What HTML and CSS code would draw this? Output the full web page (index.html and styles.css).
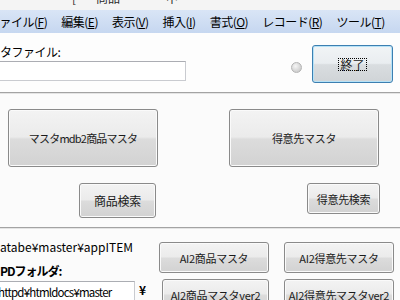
FILE: index.html
```html
<!DOCTYPE html>
<html lang="ja">
<head>
<meta charset="utf-8">
<title>Form</title>
<link rel="stylesheet" href="styles.css">
</head>
<body>
<div class="titlebar"><div class="tb-line"><span class="tb-a">[</span><span class="tb-b">商品</span><span class="tb-c">中</span></div></div>
<nav class="menubar">
  <span class="mi first">ファイル(<u>F</u>)</span>
  <span class="mi">編集(<u>E</u>)</span>
  <span class="mi">表示(<u>V</u>)</span>
  <span class="mi">挿入(<u>I</u>)</span>
  <span class="mi">書式(<u>O</u>)</span>
  <span class="mi">レコード(<u>R</u>)</span>
  <span class="mi">ツール(<u>T</u>)</span>
</nav>
<section class="filesec">
  <div class="filecol">
    <div class="lbl">タファイル:</div>
    <div class="field wide"></div>
  </div>
  <span class="radio"></span>
  <button class="btn focus"><span class="focusrect">終了</span></button>
</section>
<div class="sep"></div>
<section class="mid">
  <div class="row r1">
    <button class="btn big tight">マスタmdb2商品マスタ</button>
    <button class="btn big">得意先マスタ</button>
  </div>
  <div class="row r2">
    <button class="btn s1">商品検索</button>
    <button class="btn s2">得意先検索</button>
  </div>
</section>
<div class="sep"></div>
<section class="bottom">
  <div class="pathcol">
    <div class="path">atabe¥master¥appITEM</div>
    <div class="lbl bold">PDフォルダ:</div>
    <div class="fieldrow"><div class="field narrow">httpd¥htmldocs¥master</div><span class="yen">¥</span></div>
  </div>
  <div class="btncol c1">
    <button class="btn ai">AI2商品マスタ</button>
    <button class="btn ai shift">AI2商品マスタver2</button>
  </div>
  <div class="btncol c2">
    <button class="btn ai">AI2得意先マスタ</button>
    <button class="btn ai">AI2得意先マスタver2</button>
  </div>
</section>
</body>
</html>
```
FILE: styles.css
```css
html, body {
  margin: 0;
  padding: 0;
}
body {
  width: 400px;
  height: 300px;
  overflow: hidden;
  background: #fbfbfb;
  font-family: "Noto Sans CJK JP", "Liberation Sans", sans-serif;
  font-size: 12px;
  color: #000;
}
.titlebar {
  height: 10px;
  background: #f4f4f4;
  overflow: hidden;
  color: #2a2a2a;
}
.tb-line {
  display: flex;
  margin-top: -8px;
  line-height: 12px;
  height: 12px;
}
.tb-a { margin-left: 72px; }
.tb-b { margin-left: 20px; }
.tb-c { margin-left: 46px; }

.menubar {
  height: 23px;
  display: flex;
  align-items: center;
  gap: 14px;
  background: linear-gradient(#d9e5f6, #c6d7f0);
  white-space: nowrap;
  line-height: 23px;
  letter-spacing: -0.5px;
}
.mi u { text-decoration: underline; text-underline-offset: 1px; }
.mi.first { margin-left: -12px; }

.filesec {
  height: 59px;
  display: flex;
  align-items: flex-start;
  background: #fdfdfd;
}
.filecol {
  margin-left: -2px;
  padding-top: 12px;
  width: 188px;
}
.lbl {
  line-height: 14px;
  height: 14px;
  white-space: nowrap;
}
.filecol .lbl { margin-left: 2px; letter-spacing: -0.5px; }
.field {
  box-sizing: border-box;
  background: #fff;
  border: 1px solid #c9cbd0;
  border-top-color: #abadb3;
}
.field.wide {
  margin-top: 2px;
  width: 188px;
  height: 20px;
}
.radio {
  box-sizing: border-box;
  width: 11px;
  height: 11px;
  margin-left: 105px;
  margin-top: 29px;
  border-radius: 50%;
  border: 1px solid #b4b4b4;
  background: radial-gradient(circle at 40% 35%, #f6f6f6, #cdcdcd 75%);
}
.btn {
  box-sizing: border-box;
  padding: 0;
  margin: 0;
  font-family: "Noto Sans CJK JP", "Liberation Sans", sans-serif;
  font-size: 11px;
  letter-spacing: -0.3px;
  color: #1a1a1a;
  border: 1px solid #8a8a8a;
  border-radius: 3px;
  background: linear-gradient(#f3f3f3 0%, #ebebeb 48%, #dcdcdc 52%, #d2d2d2 100%);
  box-shadow: inset 0 0 0 1px #fafafa;
  white-space: nowrap;
  display: flex;
  align-items: center;
  justify-content: center;
}
.btn.tight { letter-spacing: -0.8px; }
.btn.focus {
  margin-left: 10px;
  margin-top: 12px;
  width: 81px;
  height: 38px;
  font-size: 12px;
  letter-spacing: 0;
  border-color: #3c7fb1;
  box-shadow: inset 0 0 0 1px #b6e2f7;
  background: linear-gradient(#f1f4f6 0%, #e9edf0 48%, #d9dde0 52%, #d0d4d7 100%);
}
.focusrect {
  outline: 1px dotted #000;
  padding: 0 1px;
  line-height: 11px;
}
.sep {
  height: 0;
  border-top: 1px solid #a3a3a3;
  border-bottom: 1px solid #e4e4e4;
}
.mid {
  height: 133px;
}
.row {
  display: flex;
  align-items: flex-start;
}
.r1 {
  padding-left: 8px;
  padding-top: 15px;
  gap: 71px;
}
.btn.big {
  width: 150px;
  height: 58px;
}
.r2 {
  margin-top: 16px;
}
.btn.s1 {
  margin-left: 79px;
  width: 77px;
  height: 35px;
  font-size: 12px;
}
.btn.s2 {
  margin-left: 151px;
  width: 73px;
  height: 31px;
}
.bottom {
  display: flex;
  align-items: flex-start;
}
.pathcol {
  width: 159px;
  padding-top: 11px;
}
.path {
  line-height: 14px;
  white-space: nowrap;
}
.lbl.bold {
  margin-top: 10px;
  font-weight: bold;
  letter-spacing: -1px;
}
.fieldrow {
  margin-top: 3px;
  display: flex;
  align-items: flex-start;
}
.field.narrow {
  margin-left: -2px;
  width: 137px;
  height: 22px;
  line-height: 20px;
  font-size: 11.5px;
  text-indent: -1px;
  letter-spacing: -0.8px;
  overflow: hidden;
  white-space: nowrap;
}
.yen {
  margin-left: 4px;
  margin-top: 2px;
  font-weight: bold;
  line-height: 14px;
}
.btncol {
  margin-top: 13px;
  width: 110px;
  display: flex;
  flex-direction: column;
  gap: 6px;
}
.c2 { margin-left: 15px; }
.btn.ai {
  width: 110px;
  height: 31px;
}
.btn.ai.shift {
  margin-left: 3px;
  width: 107px;
}
```
